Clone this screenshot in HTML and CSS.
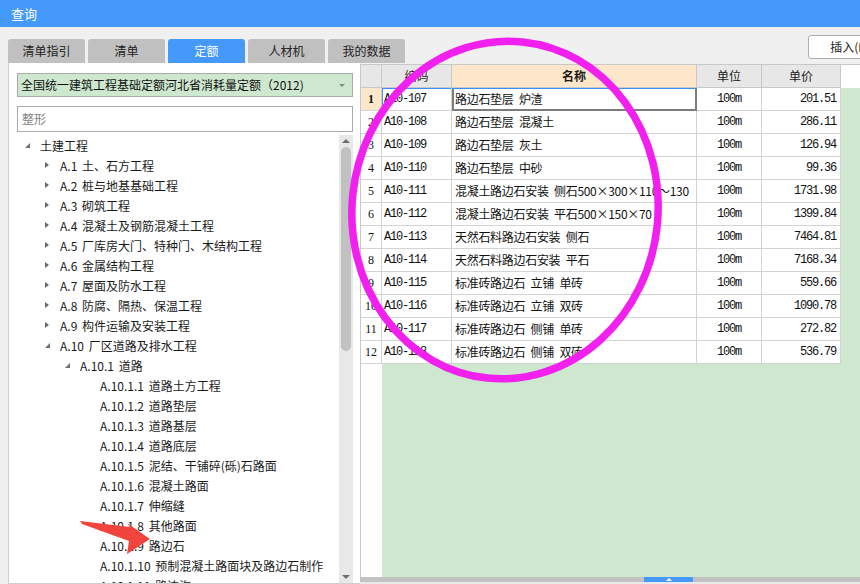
FILE: index.html
```html
<!DOCTYPE html>
<html lang="zh-CN">
<head>
<meta charset="utf-8">
<title>查询</title>
<link rel="stylesheet" href="styles.css">
</head>
<body>
<div class="titlebar">查询</div>
<div class="main">
  <div class="left">
    <div class="tabs">
      <div class="tab">清单指引</div>
      <div class="tab">清单</div>
      <div class="tab active">定额</div>
      <div class="tab">人材机</div>
      <div class="tab">我的数据</div>
    </div>
    <div class="panel">
      <div class="select"><span class="select-text">全国统一建筑工程基础定额河北省消耗量定额（2012)</span><span class="caret"></span></div>
      <div class="search">整形</div>
      <div class="treewrap">
        <div class="tree">
          <div class="row l0"><span class="tg"><i class="exp"></i></span>土建工程</div>
          <div class="row l1"><span class="tg"><i class="col"></i></span>A.1 土、石方工程</div>
          <div class="row l1"><span class="tg"><i class="col"></i></span>A.2 桩与地基基础工程</div>
          <div class="row l1"><span class="tg"><i class="col"></i></span>A.3 砌筑工程</div>
          <div class="row l1"><span class="tg"><i class="col"></i></span>A.4 混凝土及钢筋混凝土工程</div>
          <div class="row l1"><span class="tg"><i class="col"></i></span>A.5 厂库房大门、特种门、木结构工程</div>
          <div class="row l1"><span class="tg"><i class="col"></i></span>A.6 金属结构工程</div>
          <div class="row l1"><span class="tg"><i class="col"></i></span>A.7 屋面及防水工程</div>
          <div class="row l1"><span class="tg"><i class="col"></i></span>A.8 防腐、隔热、保温工程</div>
          <div class="row l1"><span class="tg"><i class="col"></i></span>A.9 构件运输及安装工程</div>
          <div class="row l1"><span class="tg"><i class="exp"></i></span>A.10 厂区道路及排水工程</div>
          <div class="row l2"><span class="tg"><i class="exp"></i></span>A.10.1 道路</div>
          <div class="row l3"><span class="tg"></span>A.10.1.1 道路土方工程</div>
          <div class="row l3"><span class="tg"></span>A.10.1.2 道路垫层</div>
          <div class="row l3"><span class="tg"></span>A.10.1.3 道路基层</div>
          <div class="row l3"><span class="tg"></span>A.10.1.4 道路底层</div>
          <div class="row l3"><span class="tg"></span>A.10.1.5 泥结、干铺碎(砾)石路面</div>
          <div class="row l3"><span class="tg"></span>A.10.1.6 混凝土路面</div>
          <div class="row l3"><span class="tg"></span>A.10.1.7 伸缩缝</div>
          <div class="row l3"><span class="tg"></span>A.10.1.8 其他路面</div>
          <div class="row l3"><span class="tg"></span>A.10.1.9 路边石</div>
          <div class="row l3"><span class="tg"></span>A.10.1.10 预制混凝土路面块及路边石制作</div>
          <div class="row l3"><span class="tg"></span>A.10.1.11 路边沟</div>
        </div>
        <div class="vscroll">
          <div class="vbtn"><i class="up"></i></div>
          <div class="vthumb"></div>
          <div class="vspace"></div>
          <div class="vbtn"><i class="down"></i></div>
        </div>
      </div>
    </div>
  </div>
  <div class="right">
    <div class="toolbar"><div class="btn">插入(I)</div></div>
    <div class="grid">
      <table class="tbl">
        <colgroup>
          <col class="c-rn"><col class="c-code"><col class="c-name"><col class="c-unit"><col class="c-price"><col class="c-fill">
        </colgroup>
        <thead>
          <tr>
            <th class="rn"></th>
            <th>编码</th>
            <th class="hsel">名称</th>
            <th>单位</th>
            <th>单价</th>
            <th class="fill"></th>
          </tr>
        </thead>
        <tbody>
          <tr class="sel"><td class="rn">1</td><td class="code csel">A10-107</td><td class="name nsel">路边石垫层 炉渣</td><td class="unit">100m</td><td class="price">201.51</td><td class="fill"></td></tr>
          <tr><td class="rn">2</td><td class="code">A10-108</td><td class="name">路边石垫层 混凝土</td><td class="unit">100m</td><td class="price">286.11</td><td class="fill"></td></tr>
          <tr><td class="rn">3</td><td class="code">A10-109</td><td class="name">路边石垫层 灰土</td><td class="unit">100m</td><td class="price">126.94</td><td class="fill"></td></tr>
          <tr><td class="rn">4</td><td class="code">A10-110</td><td class="name">路边石垫层 中砂</td><td class="unit">100m</td><td class="price">99.36</td><td class="fill"></td></tr>
          <tr><td class="rn">5</td><td class="code">A10-111</td><td class="name">混凝土路边石安装 侧石500×300×110～130</td><td class="unit">100m</td><td class="price">1731.98</td><td class="fill"></td></tr>
          <tr><td class="rn">6</td><td class="code">A10-112</td><td class="name">混凝土路边石安装 平石500×150×70</td><td class="unit">100m</td><td class="price">1399.84</td><td class="fill"></td></tr>
          <tr><td class="rn">7</td><td class="code">A10-113</td><td class="name">天然石料路边石安装 侧石</td><td class="unit">100m</td><td class="price">7464.81</td><td class="fill"></td></tr>
          <tr><td class="rn">8</td><td class="code">A10-114</td><td class="name">天然石料路边石安装 平石</td><td class="unit">100m</td><td class="price">7168.34</td><td class="fill"></td></tr>
          <tr><td class="rn">9</td><td class="code">A10-115</td><td class="name">标准砖路边石 立铺 单砖</td><td class="unit">100m</td><td class="price">559.66</td><td class="fill"></td></tr>
          <tr><td class="rn">10</td><td class="code">A10-116</td><td class="name">标准砖路边石 立铺 双砖</td><td class="unit">100m</td><td class="price">1090.78</td><td class="fill"></td></tr>
          <tr><td class="rn">11</td><td class="code">A10-117</td><td class="name">标准砖路边石 侧铺 单砖</td><td class="unit">100m</td><td class="price">272.82</td><td class="fill"></td></tr>
          <tr><td class="rn">12</td><td class="code">A10-118</td><td class="name">标准砖路边石 侧铺 双砖</td><td class="unit">100m</td><td class="price">536.79</td><td class="fill"></td></tr>
        </tbody>
      </table>
    </div>
    <div class="hscroll"><div class="hthumb"><i class="hup"></i></div></div>
    <div class="hbottom"></div>
  </div>
</div>
<svg class="overlay" width="860" height="584" viewBox="0 0 860 584">
  <ellipse cx="505" cy="210" rx="153" ry="169" transform="rotate(6 505 210)" fill="none" stroke="#f220ef" stroke-width="7.5"/>
  <polygon points="80,521 130,527 127,523 150,539 127,554 129,541 82,524" fill="#f0443c"/>
</svg>
</body>
</html>
```

FILE: styles.css
```css
* { box-sizing: border-box; }
html, body { margin: 0; padding: 0; }
body {
  width: 860px;
  height: 584px;
  overflow: hidden;
  background: #f0f0f0;
  font-family: "Noto Sans CJK SC", "Noto Sans", sans-serif;
  font-size: 12px;
  color: #1a1a1a;
  position: relative;
}
.titlebar {
  height: 27px;
  background: #4499fb;
  color: #fff;
  font-size: 13px;
  line-height: 27px;
  padding-left: 11px;
}
.main {
  display: flex;
  height: 557px;
}
.left {
  width: 360px;
  flex: none;
  padding-left: 8px;
  display: flex;
  flex-direction: column;
}
.tabs {
  margin-top: 12px;
  height: 24px;
  display: flex;
  gap: 3px;
  position: relative;
  z-index: 1;
}
.tab {
  flex: none;
  width: 77px;
  height: 24px;
  background: #c0c0c0;
  border-radius: 3px 3px 0 0;
  text-align: center;
  line-height: 24px;
  color: #222;
}
.tab.active {
  background: #4499fb;
  color: #fff;
}
.panel {
  flex: 1;
  min-height: 0;
  background: #fff;
  border-left: 1px solid #cfcfcf;
  border-bottom: 1px solid #cfcfcf;
  padding: 10px 7px 0 8px;
  display: flex;
  flex-direction: column;
}
.select {
  height: 24px;
  border: 1px solid #aaaaaa;
  background: #cde8cf;
  display: flex;
  align-items: center;
  padding-left: 3px;
  color: #111;
}
.select-text { flex: 1; line-height: 22px; }
.caret {
  width: 0; height: 0;
  border-left: 3px solid transparent;
  border-right: 3px solid transparent;
  border-top: 3px solid #888;
  margin-right: 7px;
}
.search {
  margin-top: 9px;
  height: 26px;
  border: 1px solid #aaaaaa;
  background: #fff;
  color: #808080;
  line-height: 24px;
  padding-left: 4px;
}
.treewrap {
  margin-top: 3px;
  flex: 1;
  min-height: 0;
  display: flex;
  overflow: hidden;
}
.tree {
  flex: 1;
  overflow: hidden;
}
.row {
  height: 20px;
  display: flex;
  align-items: center;
  white-space: pre;
  word-spacing: 2px;
  color: #1a1a1a;
}
.row.l0 { padding-left: 3px; }
.row.l1 { padding-left: 23px; }
.row.l2 { padding-left: 43px; }
.row.l3 { padding-left: 63px; }
.tg {
  width: 20px;
  height: 20px;
  display: flex;
  align-items: center;
  padding-left: 5px;
  flex: none;
}
.tg .exp {
  width: 0; height: 0;
  border-right: 5px solid #6f6f6f;
  border-top: 5px solid transparent;
  margin-top: 1px;
}
.tg .col {
  width: 0; height: 0;
  border-left: 4px solid #6a6a6a;
  border-top: 3.5px solid transparent;
  border-bottom: 3.5px solid transparent;
}
.vscroll {
  width: 14px;
  background: #e8e8e8;
  display: flex;
  flex-direction: column;
  align-items: center;
}
.vbtn {
  height: 12px;
  width: 14px;
  display: flex;
  align-items: center;
  justify-content: center;
}
.vbtn .up {
  width: 0; height: 0;
  border-left: 4px solid transparent;
  border-right: 4px solid transparent;
  border-bottom: 4px solid #6e6e6e;
}
.vbtn .down {
  width: 0; height: 0;
  border-left: 4px solid transparent;
  border-right: 4px solid transparent;
  border-top: 4px solid #6e6e6e;
}
.vthumb {
  width: 10px;
  height: 204px;
  background: #c1c1c1;
  border-radius: 5px;
}
.vspace { flex: 1; }
.right {
  flex: 1;
  min-width: 0;
  display: flex;
  flex-direction: column;
  overflow: hidden;
}
.toolbar {
  height: 37px;
  padding-top: 8px;
  padding-left: 448px;
  display: flex;
}
.btn {
  flex: none;
  width: 80px;
  height: 24px;
  border: 1px solid #adadad;
  border-radius: 3px;
  background: #fff;
  text-align: center;
  line-height: 22px;
  color: #222;
}
.grid {
  flex: 1;
  min-height: 0;
  border-left: 1px solid #c8c8c8;
  background: linear-gradient(to right, #ffffff 21px, #cde8cf 21px);
  overflow: hidden;
}
.tbl {
  width: 499px;
  table-layout: fixed;
  border-collapse: separate;
  border-spacing: 0;
  border-top: 1px solid #c8c8c8;
}
.c-rn { width: 21px; }
.c-code { width: 70px; }
.c-name { width: 245px; }
.c-unit { width: 65px; }
.c-price { width: 79px; }
.c-fill { width: 19px; }
.tbl th, .tbl td {
  height: 22px;
  padding: 0;
  border-right: 1px solid #d3d3d3;
  border-bottom: 1px solid #d3d3d3;
  white-space: pre;
  overflow: hidden;
  line-height: 22px;
}
.tbl th {
  background: #e7e7e7;
  font-weight: normal;
  color: #1a1a1a;
  border-right-color: #c8c8c8;
  border-bottom-color: #c8c8c8;
}
.tbl th.hsel {
  background: #fde6c9;
  font-weight: bold;
}
.tbl th.fill {
  background: #fff;
  border: none;
}
.tbl td { background: #fff; color: #111; }
.tbl td.fill { background: transparent; border: none; }
.tbl td.rn {
  font-family: "Liberation Serif", serif;
  font-size: 12px;
  text-align: center;
}
.tbl tr.sel td.rn {
  background: #fde6c9;
  font-weight: bold;
}
.tbl td.code, .tbl td.unit, .tbl td.price {
  font-family: "Liberation Mono", "DejaVu Sans Mono", monospace;
  font-size: 12px;
  letter-spacing: -1.2px;
}
.tbl td.code { padding-left: 2px; }
.tbl td.unit { text-align: center; }
.tbl td.price { text-align: right; padding-right: 4px; }
.tbl td.name { padding-left: 3px; word-spacing: 3px; letter-spacing: -0.3px; }
.tbl td.csel { box-shadow: inset 1px 1px 0 #3d8ef7; }
.tbl td.nsel {
  box-shadow: inset 0 1px 0 #3d8ef7, inset 2px 0 0 #7c7c7c, inset -1px -1px 0 #7c7c7c;
  border-right-color: #7c7c7c;
  border-bottom-color: #7c7c7c;
}
.hscroll {
  height: 5px;
  background: #c2c2c2;
  padding-left: 284px;
  display: flex;
}
.hthumb {
  width: 49px;
  height: 5px;
  background: #4499fb;
  display: flex;
  align-items: center;
  justify-content: center;
}
.hup {
  width: 0; height: 0;
  border-left: 3px solid transparent;
  border-right: 3px solid transparent;
  border-bottom: 3px solid #fff;
}
.hbottom {
  height: 2px;
  background: #e9e9e9;
}
.overlay {
  position: absolute;
  left: 0;
  top: 0;
  z-index: 2;
  pointer-events: none;
}
```
